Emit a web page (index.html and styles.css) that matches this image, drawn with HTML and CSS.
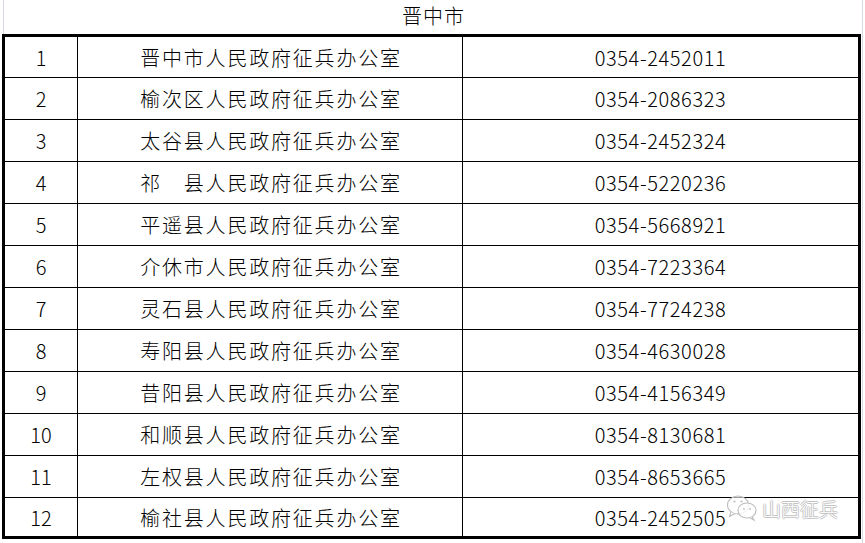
FILE: index.html
```html
<!DOCTYPE html>
<html lang="zh">
<head>
<meta charset="utf-8">
<link rel="stylesheet" href="styles.css">
</head>
<body>
<div class="page">
  <div class="title">晋中市</div>
  <div class="sheet">
    <div class="row first"><div class="c num">1</div><div class="c name">晋中市人民政府征兵办公室</div><div class="c tel">0354-2452011</div></div>
    <div class="row"><div class="c num">2</div><div class="c name">榆次区人民政府征兵办公室</div><div class="c tel">0354-2086323</div></div>
    <div class="row"><div class="c num">3</div><div class="c name">太谷县人民政府征兵办公室</div><div class="c tel">0354-2452324</div></div>
    <div class="row"><div class="c num">4</div><div class="c name">祁　县人民政府征兵办公室</div><div class="c tel">0354-5220236</div></div>
    <div class="row"><div class="c num">5</div><div class="c name">平遥县人民政府征兵办公室</div><div class="c tel">0354-5668921</div></div>
    <div class="row"><div class="c num">6</div><div class="c name">介休市人民政府征兵办公室</div><div class="c tel">0354-7223364</div></div>
    <div class="row"><div class="c num">7</div><div class="c name">灵石县人民政府征兵办公室</div><div class="c tel">0354-7724238</div></div>
    <div class="row"><div class="c num">8</div><div class="c name">寿阳县人民政府征兵办公室</div><div class="c tel">0354-4630028</div></div>
    <div class="row"><div class="c num">9</div><div class="c name">昔阳县人民政府征兵办公室</div><div class="c tel">0354-4156349</div></div>
    <div class="row"><div class="c num">10</div><div class="c name">和顺县人民政府征兵办公室</div><div class="c tel">0354-8130681</div></div>
    <div class="row"><div class="c num">11</div><div class="c name">左权县人民政府征兵办公室</div><div class="c tel">0354-8653665</div></div>
    <div class="row last"><div class="c num">12</div><div class="c name">榆社县人民政府征兵办公室</div><div class="c tel">0354-2452505</div></div>
  </div>
  <div class="grid-left"></div>
  <div class="grid-right"></div>
  <div class="watermark">
    <svg class="wm-icon" width="34" height="28" viewBox="0 0 34 28">
      <ellipse cx="12" cy="11" rx="10.5" ry="9" fill="rgba(255,255,255,0.6)" stroke="#bdbdbd" stroke-width="1.1"/>
      <path d="M5 18 L3.5 22.5 L9 19.5" fill="rgba(255,255,255,0.6)" stroke="#bdbdbd" stroke-width="1.1"/>
      <ellipse cx="21" cy="16.5" rx="9" ry="7.5" fill="rgba(255,255,255,0.8)" stroke="#bdbdbd" stroke-width="1.1"/>
      <path d="M26 22.5 L28 26 L23.5 23.6" fill="rgba(255,255,255,0.8)" stroke="#bdbdbd" stroke-width="1.1"/>
      <circle cx="8.5" cy="7.5" r="1.1" fill="#bdbdbd"/>
      <circle cx="15.5" cy="7.5" r="1.1" fill="#bdbdbd"/>
      <circle cx="18" cy="15" r="0.9" fill="#bdbdbd"/>
      <circle cx="24" cy="15" r="0.9" fill="#bdbdbd"/>
    </svg>
    <span class="wm-text">山西征兵</span>
  </div>
</div>
</body>
</html>
```
FILE: styles.css
```css
html, body {
  margin: 0;
  padding: 0;
  background: #ffffff;
}
.page {
  position: relative;
  width: 865px;
  height: 543px;
  overflow: hidden;
  font-family: "Noto Sans CJK SC", "Noto Sans CJK JP", sans-serif;
  color: #000;
}
.title {
  height: 34px;
  line-height: 32px;
  text-align: center;
  font-size: 20px;
  font-weight: 300;
  letter-spacing: 1px;
  padding-left: 2px;
}
.sheet {
  margin-left: 2px;
  width: 853px;
  border: 3px solid #000;
  display: flex;
  flex-direction: column;
}
.row {
  display: grid;
  grid-template-columns: 73px 385px 395px;
  height: 41px;
  border-top: 1px solid #000;
}
.row.first {
  height: 40px;
  border-top: none;
}
.row.last {
  height: 38px;
}
.c {
  display: flex;
  align-items: center;
  justify-content: center;
  font-size: 20px;
  font-weight: 300;
}
.num, .name {
  border-right: 1px solid #000;
}
.name {
  letter-spacing: 1.8px;
  padding-left: 2px;
}
.tel {
  font-size: 20px;
  letter-spacing: 0.6px;
}
.grid-left {
  position: absolute;
  left: 3px;
  top: 0;
  width: 1px;
  height: 34px;
  background: #d6dbe6;
}
.grid-right {
  position: absolute;
  left: 862px;
  top: 0;
  width: 1px;
  height: 543px;
  background: #d6dbe6;
}
.watermark {
  position: absolute;
  left: 726px;
  top: 494px;
  display: flex;
  align-items: center;
  gap: 2px;
}
.wm-text {
  font-size: 19px;
  font-weight: 300;
  color: #ffffff;
  letter-spacing: 0px;
  text-shadow: 1px 0 0 #c4c4c4, -1px 0 0 #c4c4c4, 0 1px 0 #c4c4c4, 0 -1px 0 #c4c4c4;
}
```
